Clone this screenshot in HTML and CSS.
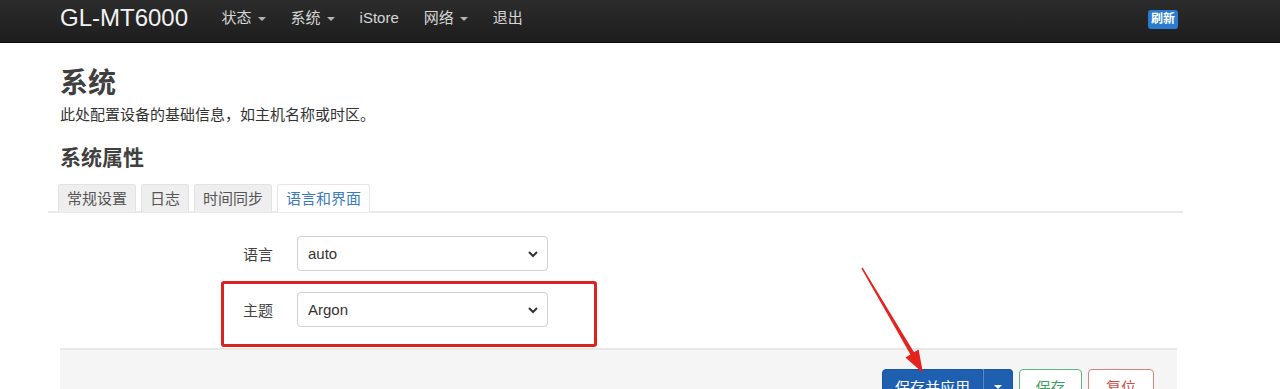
FILE: index.html
```html
<!DOCTYPE html>
<html lang="zh-CN">
<head>
    <meta charset="UTF-8" />
    <title>系统 - GL-MT6000</title>
    <link rel="stylesheet" href="styles.css">
</head>
<body>
    <header class="navbar">
        <a class="brand" href="#">GL-MT6000</a>
        <ul class="nav">
            <li class="dropdown">状态<span class="caret"></span></li>
            <li class="dropdown">系统<span class="caret"></span></li>
            <li>iStore</li>
            <li class="dropdown">网络<span class="caret"></span></li>
            <li>退出</li>
        </ul>
        <span class="badge">刷新</span>
    </header>

    <main class="container">
        <h2>系统</h2>
        <p class="desc">此处配置设备的基础信息，如主机名称或时区。</p>

        <h3>系统属性</h3>
        <ul class="tabs">
            <li>常规设置</li>
            <li>日志</li>
            <li>时间同步</li>
            <li class="active">语言和界面</li>
        </ul>

        <div class="form">
            <div class="form-row">
                <label>语言</label>
                <div class="select">
                    <span>auto</span>
                    <svg width="12" height="8" viewBox="0 0 12 8"><path d="M2 2l4 4 4-4" fill="none" stroke="#333" stroke-width="2"/></svg>
                </div>
            </div>
            <div class="form-row">
                <label>主题</label>
                <div class="select">
                    <span>Argon</span>
                    <svg width="12" height="8" viewBox="0 0 12 8"><path d="M2 2l4 4 4-4" fill="none" stroke="#333" stroke-width="2"/></svg>
                </div>
            </div>
        </div>

        <div class="actions">
            <div class="btn-group">
                <button class="btn btn-primary">保存并应用</button>
                <button class="btn btn-primary btn-caret"><span class="caret"></span></button>
            </div>
            <button class="btn btn-save">保存</button>
            <button class="btn btn-reset">复位</button>
        </div>
    </main>

    <!-- annotations drawn over the screenshot -->
    <div class="mark-box"></div>
    <svg class="mark-arrow" width="1280" height="389" viewBox="0 0 1280 389">
        <polygon points="862.6,267.6 914,352.2 918.6,349.4 923,373 905.4,357.4 910.4,354.6 861.4,268.4" fill="#e5221d"/>
    </svg>
</body>
</html>
```

FILE: styles.css
```css
* {
    margin: 0;
    padding: 0;
    box-sizing: border-box;
}

body {
    position: relative;
    font-family: 'Liberation Sans', 'Noto Sans CJK SC', sans-serif;
    color: #333;
    background: #fff;
    height: 389px;
    overflow: hidden;
}

ul {
    list-style: none;
}

.navbar {
    height: 43px;
    display: flex;
    align-items: center;
    padding-left: 60px;
    background: linear-gradient(#2c2c2c, #1d1d1d);
    border-bottom: 1px solid #0a0a0a;
}

.brand {
    color: #f2f2f2;
    font-size: 24px;
    line-height: 30px;
    text-decoration: none;
    margin-top: -6px;
}

.nav {
    display: flex;
    margin-left: 21px;
    margin-top: -6px;
}

.nav li {
    color: #d6d6d6;
    font-size: 15px;
    line-height: 20px;
    padding: 0 12.5px;
    display: flex;
    align-items: center;
}

.caret {
    display: inline-block;
    width: 0;
    height: 0;
    border-top: 4px solid currentColor;
    border-left: 4px solid transparent;
    border-right: 4px solid transparent;
    margin-left: 6px;
    margin-top: 2px;
    opacity: 0.8;
}

.badge {
    margin-left: auto;
    margin-right: 102px;
    margin-top: -4px;
    background: #2b7bd0;
    color: #fff;
    font-size: 12px;
    font-weight: 700;
    line-height: 19px;
    padding: 0 3px;
    border-radius: 3px;
}

.container {
    margin-left: 60px;
    width: 1123px;
}

h2 {
    font-size: 28px;
    line-height: 34px;
    font-weight: 700;
    color: #404040;
    margin-top: 24px;
}

.desc {
    font-size: 15px;
    line-height: 20px;
    margin-top: 4px;
}

h3 {
    font-size: 21px;
    line-height: 26px;
    font-weight: 700;
    color: #404040;
    margin-top: 20px;
}

.tabs {
    display: flex;
    gap: 5px;
    margin-top: 13px;
    margin-left: -12px;
    padding-left: 10px;
    border-bottom: 2px solid #eaeaea;
}

.tabs li {
    font-size: 15px;
    line-height: 27px;
    padding: 0 8px;
    color: #555;
    background: #eee;
    border: 1px solid #e2e2e2;
    border-bottom: none;
    border-radius: 3px 3px 0 0;
    margin-bottom: -1px;
}

.tabs li.active {
    color: #3b7bbf;
    background: #fff;
    border-color: #e6e6e6;
}

.form {
    padding-top: 23px;
}

.form-row {
    display: flex;
    align-items: center;
    height: 35px;
    margin-bottom: 21px;
}

.form-row label {
    width: 213px;
    text-align: right;
    font-size: 15px;
    color: #444;
}

.select {
    margin-left: 24px;
    width: 251px;
    height: 35px;
    border: 1px solid #d0d0d0;
    border-radius: 4px;
    display: flex;
    align-items: center;
    justify-content: space-between;
    padding: 0 8px 0 10px;
    font-size: 15px;
    color: #333;
    background: #fff;
}

.actions {
    width: 1117px;
    margin-top: 2px;
    height: 60px;
    background: #f5f5f5;
    border-top: 2px solid #e8e8e8;
    display: flex;
    justify-content: flex-end;
    align-items: flex-start;
    gap: 6px;
    padding: 19px 23px 0 0;
}

.btn {
    font-family: inherit;
    font-size: 15px;
    line-height: 20px;
    height: 36px;
    padding: 8px 14px;
    border-radius: 4px;
    background: #fff;
    cursor: pointer;
}

.btn-group {
    display: flex;
}

.btn-primary {
    background: #1f5fb0;
    border: 1px solid #1a55a0;
    color: #fff;
    padding: 8px 12px;
    border-radius: 4px 0 0 4px;
}

.btn-primary.btn-caret {
    width: 30px;
    padding: 0;
    border-left: 1px solid #5d88c4;
    border-radius: 0 4px 4px 0;
    display: flex;
    align-items: center;
    justify-content: center;
}

.btn-primary .caret {
    margin: 0;
    opacity: 1;
    color: #fff;
}

.btn-save {
    width: 63px;
    border: 1px solid #5fb37d;
    color: #3ea35f;
}

.btn-reset {
    width: 66px;
    border: 1px solid #d9837e;
    color: #d44a42;
}

.mark-box {
    position: absolute;
    left: 221px;
    top: 281px;
    width: 376px;
    height: 66px;
    border: 3px solid #d8231f;
    border-radius: 3px;
}

.mark-arrow {
    position: absolute;
    left: 0;
    top: 0;
    pointer-events: none;
}
```
